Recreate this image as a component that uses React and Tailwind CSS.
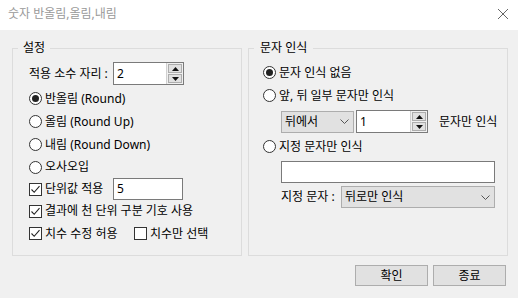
import React from 'react';

const font = "font-['Noto_Sans','Noto_Sans_CJK_KR',sans-serif]";

function Radio({ checked, label }) {
  return (
    <div className="flex items-center h-[23px]">
      <span className="w-[13px] h-[13px] rounded-full border border-[#333] bg-white flex items-center justify-center shrink-0">
        {checked && <span className="w-[7px] h-[7px] rounded-full bg-[#222]" />}
      </span>
      <span className="ml-[3px] whitespace-nowrap">{label}</span>
    </div>
  );
}

function Check({ checked, label }) {
  return (
    <span className="flex items-center">
      <span className="w-[13px] h-[13px] border border-[#333] bg-white flex items-center justify-center shrink-0">
        {checked && (
          <svg width="11" height="11" viewBox="0 0 11 11">
            <path d="M1.5 5.5 L4.2 8.3 L9.5 2.2" fill="none" stroke="#222" strokeWidth="1.1" />
          </svg>
        )}
      </span>
      <span className="ml-[3px] whitespace-nowrap">{label}</span>
    </span>
  );
}

function Arrow({ down }) {
  return (
    <svg width="7" height="4" viewBox="0 0 7 4">
      <path d={down ? 'M0 0 L7 0 L3.5 4 Z' : 'M0 4 L7 4 L3.5 0 Z'} fill="#111" />
    </svg>
  );
}

function Spin({ value, inputW }) {
  return (
    <div className="flex h-[23px] border border-[#7a7a7a] bg-white">
      <div className={`${inputW} flex items-center pl-[3px]`}>{value}</div>
      <div className="w-[17px] flex flex-col border-l border-[#d0d0d0] bg-[#f0f0f0] p-[1px] gap-[1px]">
        <div className="flex-1 flex items-center justify-center border border-[#adadad] bg-[#e1e1e1]">
          <Arrow />
        </div>
        <div className="flex-1 flex items-center justify-center border border-[#adadad] bg-[#e1e1e1]">
          <Arrow down />
        </div>
      </div>
    </div>
  );
}

function Combo({ value, width }) {
  return (
    <div className={`${width} h-[22px] flex items-center justify-between border border-[#adadad] bg-[#e1e1e1] pl-[3px] pr-[4px]`}>
      <span className="whitespace-nowrap">{value}</span>
      <svg width="9" height="5" viewBox="0 0 9 5">
        <path d="M0.5 0.5 L4.5 4.5 L8.5 0.5" fill="none" stroke="#555" strokeWidth="1" />
      </svg>
    </div>
  );
}

export default function App() {
  return (
    <div className={`w-[518px] h-[298px] bg-[#f0f0f0] text-[12px] leading-[16px] text-black ${font}`}>
      {/* 제목 표시줄 */}
      <div className="h-[30px] bg-white flex items-center justify-between pl-[8px] pr-[10px]">
        <span className="text-[#999] -mt-[2px]">숫자 반올림,올림,내림</span>
        <svg width="10" height="10" viewBox="0 0 10 10" className="-mt-[2px]">
          <path d="M0 0 L10 10 M10 0 L0 10" stroke="#666" strokeWidth="1" />
        </svg>
      </div>

      <div className="flex gap-[6px] pl-[12px] pt-[10px]">
        {/* 설정 */}
        <fieldset className="w-[230px] h-[216px] border border-[#dcdcdc] pl-[16px]">
          <legend className="ml-[-11px] px-[5px]">설정</legend>
          <div className="pt-[6px] flex items-center">
            <span className="w-[84px] whitespace-nowrap">적용 소수 자리 :</span>
            <Spin value="2" inputW="w-[52px]" />
          </div>
          <div className="mt-[2px]">
            <Radio checked label="반올림 (Round)" />
            <Radio label="올림 (Round Up)" />
            <Radio label="내림 (Round Down)" />
            <div className="h-[22px] flex items-center">
              <span className="w-[13px] h-[13px] rounded-full border border-[#333] bg-white shrink-0" />
              <span className="ml-[3px]">오사오입</span>
            </div>
            <div className="h-[22px] flex items-center">
              <span className="w-[84px]">
                <Check checked label="단위값 적용" />
              </span>
              <div className="w-[70px] h-[22px] border border-[#7a7a7a] bg-white flex items-center pl-[3px]">5</div>
            </div>
            <div className="h-[22px] flex items-center">
              <Check checked label="결과에 천 단위 구분 기호 사용" />
            </div>
            <div className="h-[23px] flex items-center">
              <span className="w-[105px]">
                <Check checked label="치수 수정 허용" />
              </span>
              <Check label="치수만 선택" />
            </div>
          </div>
        </fieldset>

        {/* 문자 인식 */}
        <fieldset className="w-[260px] h-[216px] border border-[#dcdcdc] pl-[14px]">
          <legend className="ml-[-9px] px-[6px]">문자 인식</legend>
          <div className="pt-[5px]">
            <Radio checked label="문자 인식 없음" />
            <Radio label="앞, 뒤 일부 문자만 인식" />
          </div>
          <div className="mt-[3px] pl-[18px] flex items-center">
            <Combo value="뒤에서" width="w-[73px]" />
            <div className="ml-[2px]">
              <Spin value="1" inputW="w-[53px]" />
            </div>
            <span className="ml-[11px] whitespace-nowrap">문자만 인식</span>
          </div>
          <div className="mt-[2px]">
            <Radio label="지정 문자만 인식" />
          </div>
          <div className="pl-[18px] mt-[3px]">
            <div className="w-[214px] h-[22px] border border-[#7a7a7a] bg-white" />
            <div className="mt-[3px] flex items-center">
              <span className="w-[60px] whitespace-nowrap">지정 문자 :</span>
              <Combo value="뒤로만 인식" width="w-[154px]" />
            </div>
          </div>
        </fieldset>
      </div>

      <div className="flex justify-end gap-[5px] pr-[12px] mt-[9px]">
        <button className="w-[73px] h-[21px] border border-[#adadad] bg-[#e1e1e1] flex items-center justify-center">확인</button>
        <button className="w-[73px] h-[21px] border border-[#adadad] bg-[#e1e1e1] flex items-center justify-center">종료</button>
      </div>
    </div>
  );
}
